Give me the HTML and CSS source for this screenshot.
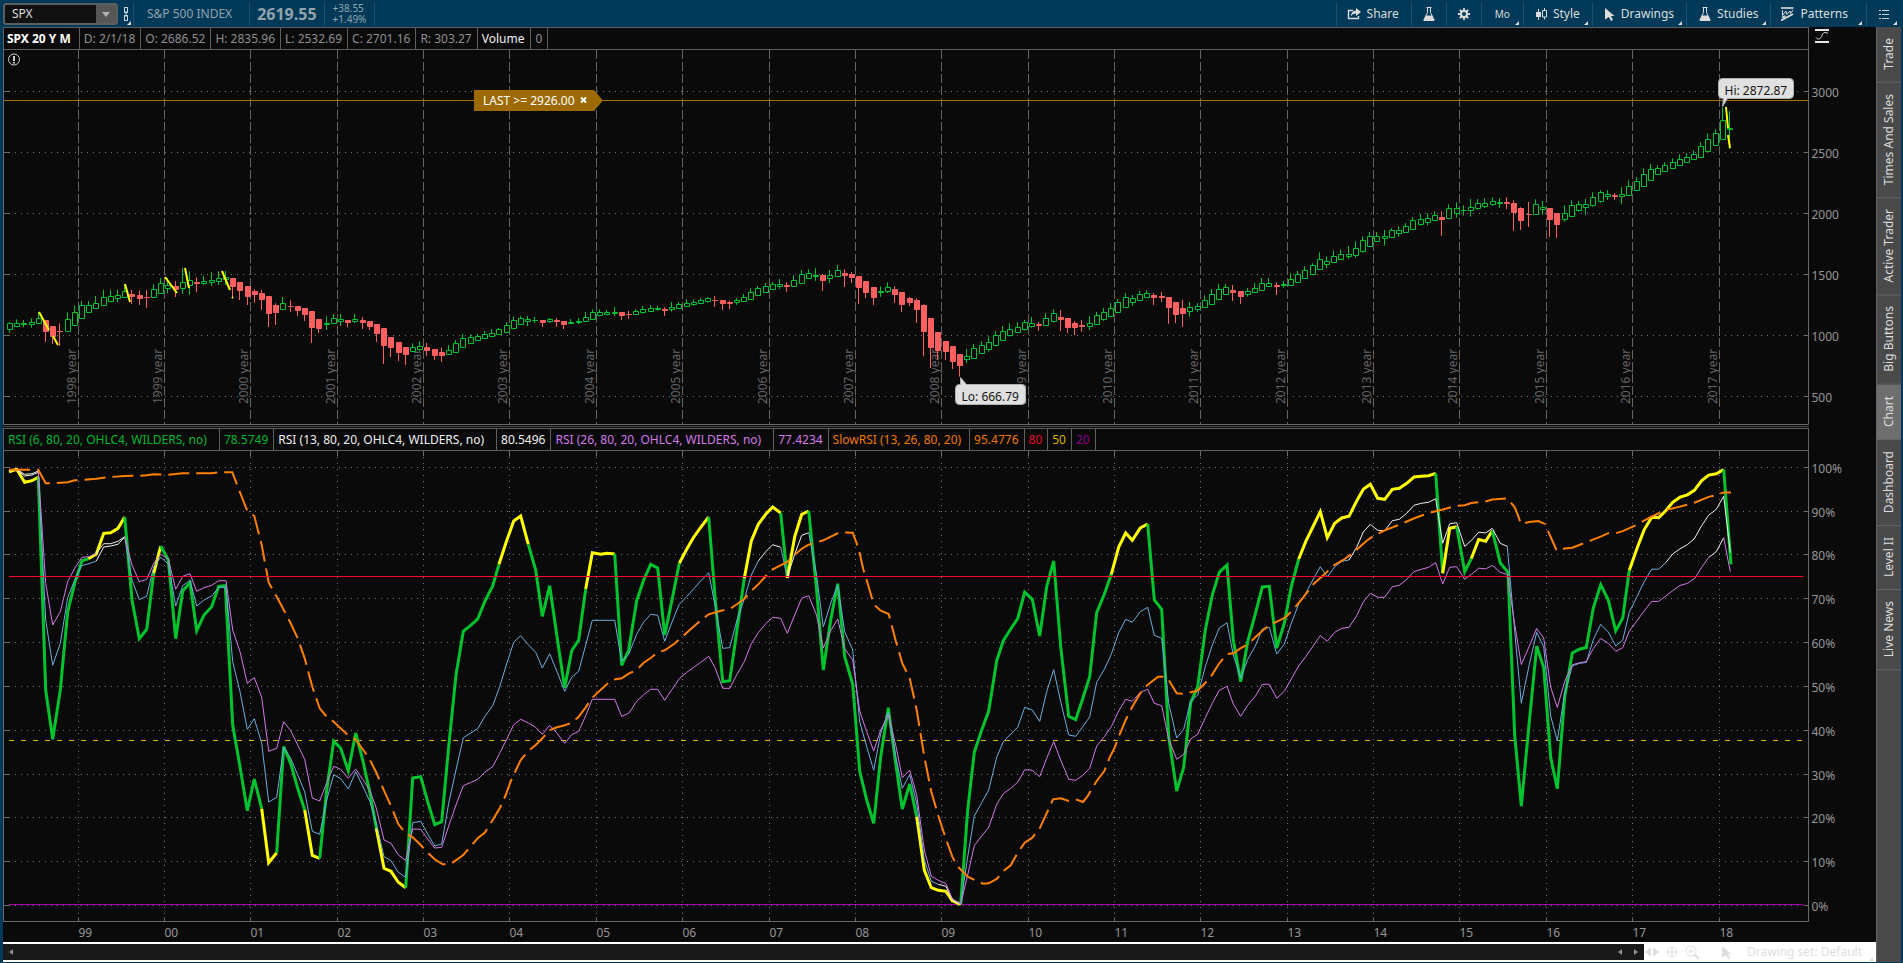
FILE: index.html
```html
<!DOCTYPE html>
<html lang="en">
<head>
    <meta charset="UTF-8">
    <title>SPX - Chart</title>
    <link rel="stylesheet" href="styles.css">
</head>
<body>
    <header class="toolbar">
        <div class="symbol">
            <input type="text" value="SPX" aria-label="Symbol">
            <button type="button" aria-label="Recent symbols"><svg width="8" height="5"><path d="M0 0h8L4 5z" fill="#b4b4b4"/></svg></button>
        </div>
        <button type="button" class="link-btn menu" aria-label="Link color">
            <svg width="6" height="14" fill="none" stroke="#c8d4dc"><rect x="1.5" y="0.5" width="3" height="5"/><rect x="1.5" y="8.5" width="3" height="5"/><path d="M3 4v6"/></svg>
        </button>
        <div class="name">S&amp;P 500 INDEX</div>
        <div class="last">2619.55</div>
        <div class="change"><span>+38.55</span><span>+1.49%</span></div>
        <nav class="actions">
            <button type="button" class="share">
                <svg width="14" height="12"><path d="M6 2.5H1.5v8h10V8" fill="none" stroke="#dcdcdc" stroke-width="1.4"/><path d="M9 0l5 4-5 4V5.500C6.500 5.500 5 6.500 3.500 8.500 4 5 6 2.800 9 2.500z" fill="#dcdcdc"/></svg>
                Share
            </button>
            <button type="button" class="icon-only" aria-label="Edit studies">
                <svg width="12" height="14"><path d="M3.500.500h5M4.500.500v5L.800 13h10.400L7.500 5.500v-5" fill="none" stroke="#dcdcdc"/><path d="M3.200 8.500h5.600L11.500 14H.500z" fill="#dcdcdc"/></svg>
            </button>
            <button type="button" class="icon-only" aria-label="Settings">
                <svg width="12" height="12" fill="none" stroke="#dcdcdc"><circle cx="6" cy="6" r="3" stroke-width="2"/><path d="M6 0v2.500M6 9.500V12M0 6h2.500M9.500 6H12M1.800 1.800l1.700 1.700M8.500 8.500l1.700 1.700M1.800 10.200l1.700-1.700M8.500 3.500l1.700-1.700" stroke-width="1.800"/></svg>
            </button>
            <button type="button" class="menu period">Mo</button>
            <button type="button" class="menu">
                <svg width="11" height="12"><path d="M2.500 1v11" stroke="#dcdcdc"/><path d="M0 4h5v5H0z" fill="#dcdcdc"/><path d="M8.500 0v2.500M8.500 9v2.500M6.500 2.500h4V9h-4z" fill="none" stroke="#dcdcdc"/></svg>
                Style
            </button>
            <button type="button" class="menu">
                <svg width="10" height="13"><path d="M0 0l9.500 8H6l2 4-2 1-2-4-4 2.500z" fill="#dcdcdc"/></svg>
                Drawings
            </button>
            <button type="button" class="menu">
                <svg width="12" height="14"><path d="M3.500.500h5M4.500.500v5L.800 13h10.400L7.500 5.500v-5" fill="none" stroke="#dcdcdc"/><path d="M3.200 8.500h5.600L11.500 14H.500z" fill="#dcdcdc"/></svg>
                Studies
            </button>
            <button type="button" class="menu wide">
                <svg width="13" height="14" fill="none" stroke="#dcdcdc"><path d="M0 1h12.500" stroke-width="1.600"/><path d="M1.500 3v5.500L5 4l1 3.500L9 4l.500 2.500L12 3"/><path d="M0 13.500L12 7M1 10.500L4.500 9" stroke-width="1.800"/></svg>
                Patterns
            </button>
            <button type="button" class="menu list" aria-label="Menu">
                <svg width="10" height="10" stroke="#c8d4dc"><path d="M0 1.500h2M3 1.500h7M0 5.500h2M3 5.500h7M0 9.500h2M3 9.500h7"/></svg>
            </button>
        </nav>
    </header>
    <main class="workspace">
        <section class="chart">
            <div class="info-row">
                <ul class="info">
                    <li class="title">SPX 20 Y M</li>
                    <li>D: 2/1/18</li>
                    <li>O: 2686.52</li>
                    <li>H: 2835.96</li>
                    <li>L: 2532.69</li>
                    <li>C: 2701.16</li>
                    <li>R: 303.27</li>
                    <li class="volume">Volume</li>
                    <li>0</li>
                </ul>
                <button type="button" class="scale-btn" aria-label="Axis scale">
                    <svg width="14" height="14" fill="none" stroke="#e6e6e6"><path d="M0 1h14M0 13h14" stroke-width="2"/><path d="M1 8.500c2 3 5 1 6-2s3-4 6-2"/></svg>
                </button>
            </div>
            <div class="plot plot-price"><svg id="price"></svg></div>
            <div class="splitter"></div>
            <div class="info-row">
                <ul class="info">
                    <li class="green study">RSI (6, 80, 20, OHLC4, WILDERS, no)</li>
                    <li class="green">78.5749</li>
                    <li class="white study">RSI (13, 80, 20, OHLC4, WILDERS, no)</li>
                    <li class="white">80.5496</li>
                    <li class="violet study">RSI (26, 80, 20, OHLC4, WILDERS, no)</li>
                    <li class="violet">77.4234</li>
                    <li class="orange slow">SlowRSI (13, 26, 80, 20)</li>
                    <li class="orange">95.4776</li>
                    <li class="red">80</li>
                    <li class="yellow">50</li>
                    <li class="purple">20</li>
                </ul>
            </div>
            <div class="plot plot-rsi"><svg id="rsi"></svg></div>
            <footer class="bottom">
                <div class="scrollbar">
                    <button type="button" aria-label="Scroll to start"><svg width="4" height="6"><path d="M4 0v6L0 3z" fill="#8c8c8c"/></svg></button>
                    <span class="track"></span>
                    <button type="button" aria-label="Scroll left"><svg width="4" height="6"><path d="M4 0v6L0 3z" fill="#8c8c8c"/></svg></button>
                    <button type="button" aria-label="Scroll right"><svg width="4" height="6"><path d="M0 0v6l4-3z" fill="#8c8c8c"/></svg></button>
                </div>
                <div class="tools">
                    <button type="button" aria-label="Pan"><svg width="14" height="10" fill="#dedede"><path d="M0 5l5-4v8zM14 5L9 1v8zM5 1h1v8H5zM8 1h1v8H8z"/></svg></button>
                    <button type="button" aria-label="Crosshair"><svg width="12" height="12" fill="none" stroke="#dedede"><circle cx="6" cy="6" r="4.500"/><path d="M6 0v12M0 6h12"/></svg></button>
                    <button type="button" aria-label="Zoom in"><svg width="15" height="15" fill="none" stroke="#dedede"><circle cx="6" cy="6" r="5"/><path d="M6 3.500v5M3.500 6h5"/><path d="M9.500 9.500l4.500 4.500" stroke-width="2"/></svg></button>
                    <button type="button" class="pointer" aria-label="Pointer"><svg width="10" height="13"><path d="M0 0l9.500 8H6l2 4-2 1-2-4-4 2.500z" fill="#dedede"/></svg></button>
                    <button type="button" class="menu set">Drawing set: Default</button>
                </div>
            </footer>
        </section>
        <nav class="gadgets">
            <button type="button">Trade</button>
            <button type="button">Times And Sales</button>
            <button type="button">Active Trader</button>
            <button type="button">Big Buttons</button>
            <button type="button" class="active">Chart</button>
            <button type="button">Dashboard</button>
            <button type="button">Level II</button>
            <button type="button">Live News</button>
        </nav>
    </main>
    <script src="chart.js"></script>
</body>
</html>
```
FILE: styles.css
```css
*{box-sizing: border-box;}
html,body{height: 100%;margin: 0;}
body{display: flex;flex-direction: column;padding: 0 2px 1px 3px;background-color: #003a58;color: #8f8f8f;font: 12px/20px "Noto Sans","Open Sans",sans-serif;overflow: hidden;}
ul,li{list-style: none;margin: 0;padding: 0;}
button{margin: 0;padding: 0;border: 0;background: none;color: inherit;font: inherit;white-space: nowrap;cursor: pointer;}
svg{display: block;flex: none;}

/* toolbar */
.toolbar{display: flex;flex: none;height: 27px;padding: 2px 0 1px;color: #93a3ae;}
.toolbar > div,.link-btn{display: flex;align-items: center;border-right: 1px solid #1a4f6e;}
.toolbar .symbol{width: 115px;height: 22px;margin-top: 1px;border: 2px solid #5a5f62;border-radius: 3px;background-color: #111;}
.symbol input{flex: 1;min-width: 0;height: 18px;padding: 0 7px;border: 0;background: none;color: #dcdcdc;font: inherit;outline: 0;}
.symbol button{display: flex;align-items: center;justify-content: center;width: 20px;height: 18px;background-color: #565656;}
.link-btn{width: 16px;padding-left: 5px;}
.toolbar .name{padding: 0 17px 0 13px;}
.toolbar .last{padding: 0 7px;font-size: 16px;font-weight: bold;}
.toolbar .change{flex-direction: column;align-items: flex-start;justify-content: center;padding: 0 8px;font-size: 10px;line-height: 11px;}
.actions{display: flex;margin-left: auto;color: #dcdcdc;}
.actions button{display: flex;align-items: center;gap: 6px;padding: 0 12px;border-left: 1px solid #1a4f6e;}
.actions .share{padding: 0 12px 0 10px;}
.actions .wide{padding: 0 18px 0 10px;}
.actions .icon-only{padding: 0 11px;}
.actions .period{padding: 0 13px;font-size: 10px;}
.menu{position: relative;}
.menu:after{content: "";position: absolute;right: 4px;bottom: 1px;border-bottom: 4px solid #dcdcdc;border-left: 4px solid transparent;}
.link-btn:after{right: 2px;}

/* chart */
.workspace{display: flex;flex: 1;min-height: 0;}
.chart{display: flex;flex: 1;flex-direction: column;min-width: 0;background-color: #0a0a0a;}
.info-row{display: flex;flex: none;height: 23px;}
.info{display: flex;flex: 1;margin-right: 67px;border: 1px solid #5f5f5f;line-height: 21px;white-space: nowrap;}
.info li{padding: 0 5px 0 4px;border-right: 1px solid #5f5f5f;}
.info .study{padding: 0 12px 0 4px;}
.info .slow{padding: 0 8px 0 4px;}
.info .title{padding: 0 8px 0 3px;color: #fff;font-weight: bold;}
.info .volume{padding: 0 6px 0 4px;color: #f0f0f0;}
.scale-btn{align-self: flex-start;width: 14px;margin: 2px 47px 0 -61px;}
.white{color: #f0f0f0;}
.green{color: #00b82e;}
.violet{color: #d478e8;}
.orange{color: #f07800;}
.red{color: #e6002e;}
.yellow{color: #d8b400;}
.purple{color: #8c008c;}
.plot{min-height: 0;overflow: hidden;}
.plot-price{flex: 375 1 0;}
.plot-rsi{flex: 491 1 0;}
.plot svg{width: 100%;height: 100%;font: 12px "Noto Sans","Open Sans",sans-serif;}
.splitter{flex: none;height: 3px;margin-right: 67px;border-bottom: 1px solid #0a0a0a;border-top: 1px solid #0a0a0a;background-color: #4a4a4a;}

/* svg parts */
.frame{stroke: #6a6a6a;fill: none;}
.dots{stroke: #747474;stroke-dasharray: 1 5;}
.year{stroke: #646464;stroke-dasharray: 9 3;}
.year-label{fill: #646464;}
.axis-label{fill: #969696;}
.up{fill: #0a0a0a;stroke: #00c42e;}
.down{fill: #ff5f5f;stroke: #ff5f5f;}
.drawn{stroke: #ff0;stroke-width: 2;}
.alert{stroke: #a87000;}
.flag{fill: #9c6a00;}
.flag-text{fill: #fff;}
.bubble{fill: #e0e0e0;stroke: #b0b0b0;}
.bubble-text{fill: #141414;}
.notice{fill: none;stroke: #d0d0d0;}

/* bottom */
.bottom{display: flex;flex: none;height: 20px;background-color: #fff;color: #dedede;}
.scrollbar{display: flex;flex: 1;align-items: center;height: 16px;margin-top: 2px;padding: 0 6px;background-color: #191919;}
.track{flex: 1;}
.scrollbar button + button{margin-left: 12px;}
.tools{display: flex;align-items: center;gap: 7px;padding-left: 1px;}
.tools .pointer{margin-left: 15px;}
.tools .set{margin-left: 8px;padding-right: 14px;}
.tools .menu:after{right: 3px;border-bottom-color: #dedede;}

/* right side tabs */
.gadgets{display: flex;flex: none;flex-direction: column;width: 25px;border-left: 1px solid #646464;background-color: #4a4a4a;color: #dcdcdc;}
.gadgets button{padding: 12px 2px 11px;border-top: 1px solid #646464;writing-mode: vertical-rl;transform: rotate(180deg);text-align: center;}
.gadgets .active{background-color: #6e6e6e;}
```
FILE: chart.js
```javascript
var NS = 'http://www.w3.org/2000/svg';
var AXIS = 68, MONTH = 7.197, FIRST = 9.5;
var PLOT_W = 1805, LEFT = 3;
var COLORS = {Y: '#ffff00', G: '#00c42e', W: '#f0f0f0', B: '#6caede', P: '#d478e8', O: '#ff8000'};

// bars: close,high,low below the top of the block, in 1/3 px; base is the 500 level
var bars = [
    {base: 469, data: '250,247,278 250,238,262 251,240,262 247,235,263 236,216,250 276,243,306 290,259,312 275,250,318 238,217,274 217,197,257 ' +
        '196,183,236 196,183,217 190,168,206 172,150,199 169,150,187 166,150,187 154,133,172 171,150,192 176,152,195 173,150,204 ' +
        '148,133,172 130,114,160 136,114,160 150,123,171 127,84,162 121,94,165 131,112,156 124,108,135 121,96,138 115,94,135 ' +
        '112,93,135 140,115,175 152,127,180 170,139,195 164,147,188 180,150,210 222,169,261 219,190,255 190,171,206 200,181,216 ' +
        '213,199,228 225,205,243 263,214,309 267,238,279 250,229,270 235,222,252 238,222,258 248,241,262 238,222,249 248,231,267 ' +
        '261,244,270 281,253,306 317,265,372 323,292,351 338,307,363 345,322,375 322,310,334 319,304,334 332,309,348 347,328,360 ' +
        '347,323,366 331,315,345 310,300,335 295,282,322 292,283,310 289,282,303 283,273,297 280,267,291 268,264,284 256,247,278 ' +
        '241,229,268 235,228,255 240,228,258 242,231,249 248,241,261 240,234,249 246,234,261 254,244,267 247,237,252 244,234,253 ' +
        '232,216,244 217,208,240 217,208,228 217,210,225 217,201,228 227,217,240 224,213,237 214,208,225 208,198,221 205,196,215 ' +
        '206,198,212 212,202,228 202,186,215 193,186,206 190,178,200 187,178,197 181,174,191 175,171,188 182,168,201 191,181,210 ' +
        '191,182,207 181,175,195 172,162,186 157,145,179 145,138,168 139,130,158 133,126,149 133,117,147 141,127,156 121,106,137 ' +
        '103,90,131 100,88,117 106,84,123 122,102,153 106,90,129 91,75,110 107,88,141 113,96,129 143,109,192 158,124,174 ' +
        '173,142,195 154,139,171 142,127,159 164,139,189 194,157,216 188,171,198 209,175,249 275,193,348 323,235,384 332,280,357 ' +
        '335,304,360 365,319,387 377,343,410 349,327,369 325,312,356'},
    {base: 649, data: '496,484,521 487,469,515 466,453,500 454,438,482 448,430,470 442,427,458 427,420,452 430,411,443 438,426,453 415,400,438 ' +
        '400,388,428 419,390,453 443,415,459 443,423,465 440,420,456 430,408,450 406,396,434 397,384,422 385,369,410 367,358,398 ' +
        '352,339,383 355,345,377 343,333,362 340,331,353 353,339,375 353,336,366 384,352,432 404,367,429 402,360,441 382,366,410 ' +
        '379,369,395 361,346,383 343,327,374 328,312,359 322,312,344 338,315,363 350,334,372 334,324,350 325,309,338 310,294,332 ' +
        '310,294,320 320,307,345 313,303,323 298,280,317 283,273,308 271,259,296 256,250,284 238,217,269 244,229,264 229,211,248 ' +
        '223,208,239 223,198,237 205,184,233 181,169,218 169,156,200 169,156,185 169,150,197 151,145,173 151,139,170 139,129,158 ' +
        '121,112,149 118,102,137 115,100,136 106,94,122 119,94,168 85,73,116'},
    {base: 949, data: '385,367,413 391,376,407 382,357,410 370,357,389 370,355,384 364,352,377 367,355,384 371,352,387 399,361,453 422,382,450 ' +
        '404,366,441 373,358,404 382,363,404 419,385,471 434,400,474 400,376,425 376,361,410 373,363,395 373,357,404 352,337,380 ' +
        '337,331,368 343,331,360 350,339,360 343,322,372 319,301,347 304,292,332 283,265,317 268,252,302 265,256,284 256,247,275 ' +
        '247,235,266 238,223,257 232,220,248 223,211,239 199,187,230 178,160,215 160,148,197 121,82,179 145,93,207'}
];

// study lines: four blocks from left to right, a letter sets the color of what follows
var BLOCKS = [{x: 0, k: 3}, {x: 500, k: 3}, {x: 1000, k: 3}, {x: 1440, k: 2.888}];
var rsi6 = [
    'Y 27,155 50,148 74,187 96,182 115,172 G 137,810 158,958 181,810 203,575 224,490 246,422 265,416 Y 289,402 311,340 332,338 354,325 374,291 G 396,540 418,656 440,628 461,460 Y 482,378 G 505,420 527,656 548,513 570,488 590,632 612,585 635,560 656,499 676,497 698,915 720,1040 742,1172 763,1077 785,1166 Y 806,1328 830,1298 G 851,980 872,1030 893,1105 914,1170 Y 937,1306 959,1315 G 980,1110 1001,963 1022,985 1045,1053 1067,939 1088,1020 1110,1120 1129,1225 Y 1152,1345 1173,1354 1195,1387 1217,1403 G 1238,1074 1262,1070 1283,1145 1304,1214 1325,1205 1346,980 1368,765 1390,634 1411,617 1433,597 1454,545 1478,498 1497,433 Y 1519,365',
    '41,303 62,288 85,373 G 107,450 127,589 149,497 171,650 194,803 215,692 236,660 257,507 Y 277,398 302,403 322,400 344,402 G 365,736 386,690 410,542 431,480 452,433 473,444 494,645 516,540 538,430 Y 560,388 580,353 602,322 626,291 G 646,540 668,785 689,782 711,630 733,475 Y 754,363 775,313 797,283 818,261 842,279 G 862,474 Y 884,350 905,283 926,273 G 949,500 970,750 992,600 1013,491 1034,710 1058,792 1079,1053 1100,1140 1121,1210 1142,1010 1165,863 1187,1030 1207,1167 1229,1092 1250,1190 Y 1273,1350 1294,1403 1315,1411 1338,1414 1357,1442 1382,1453 G 1403,1170 1423,997 1445,930 1466,873 1490,722 1510,662 1532,627',
    '53,596 74,516 97,538 119,648 140,500 161,423 182,680 206,889 227,899 247,840 269,770 290,578 313,523 334,463 Y 356,381 377,339 397,361 421,324 443,312 G 463,540 485,568 506,950 530,1113 551,1042 572,848 593,800 616,630 637,525 658,457 681,435 700,660 722,785 743,665 766,582 787,501 808,499 830,684 853,610 874,500 896,417 Y 917,365 940,318 961,275 982,353 1004,310 1025,294 1047,289 1070,243 1090,208 1111,193 1133,235 1154,238 1177,208 1198,205 1220,190 1242,171 1264,169 1286,167 1307,160 G 1328,460 Y 1349,325 1370,320',
    'G 74,438 94,400 Y 116,345 137,350 157,320 G 181,413 204,440 224,910 244,1115 267,880 290,653 311,715 332,975 352,1065 374,800 397,673 418,662 439,657 460,543 482,476 505,520 527,609 548,572 568,434 Y 590,373 612,318 635,281 656,282 677,262 698,238 720,223 742,216 763,203 785,175 806,159 829,155 851,143 G 873,417'
];
var rsi13 = [
    'W 27,152 50,150 74,168 96,165 115,157 B 137,600 158,736 181,670 203,533 224,480 244,437 267,431 289,423 W 311,381 332,378 354,373 374,351 B 396,480 418,539 440,529 461,440 482,412 505,432 527,558 548,497 570,481 590,558 612,540 635,528 656,502 678,502 698,725 720,815 742,928 763,896 785,970 806,1146 830,1132 851,982 872,1015 893,1065 914,1115 937,1234 959,1243 980,1140 1001,1064 1022,1076 1045,1107 1067,1055 1088,1098 1110,1145 1129,1210 1152,1310 1173,1322 1195,1357 1217,1372 1238,1208 1262,1204 1283,1242 1304,1278 1325,1272 1346,1150 1368,1050 1390,953 1411,940 1433,926 1454,890 1478,857 1499,800 1519,735',
    '41,667 62,647 85,674 107,697 127,744 149,701 171,755 194,814 215,772 236,754 257,675 277,601 344,601 365,724 386,703 410,643 431,606 452,583 473,586 494,664 516,606 538,553 560,530 580,508 602,483 626,458 646,560 668,685 689,683 711,600 733,537 754,465 775,423 W 797,395 818,374 842,382 B 862,471 W 884,403 905,346 926,338 B 949,460 970,621 992,550 1013,496 1034,635 1058,690 1079,905 1100,980 1121,1051 1142,940 1165,876 1187,1010 1207,1105 1229,1064 1250,1150 1273,1320 1294,1384 1315,1393 W 1338,1399 1357,1440 1382,1453 B 1403,1310 1423,1188 1445,1148 1466,1110 1490,1012 1510,965 1532,942',
    '53,922 74,862 97,870 119,904 140,815 161,749 182,845 206,945 227,949 247,922 269,891 290,787 313,748 334,703 356,638 377,598 397,607 421,575 443,562 463,646 485,655 506,850 530,954 551,928 572,843 593,825 616,740 637,675 658,624 681,608 700,705 722,775 743,718 766,678 787,627 808,622 830,702 853,673 874,610 896,552 917,520 940,477 961,440 982,471 1004,440 1025,424 1047,420 W 1070,382 1090,336 1111,313 1133,331 1154,332 1177,302 1198,298 1220,280 1242,256 1264,250 1286,247 1307,236 1328,370 1349,311 1370,308',
    '74,365 94,348 116,324 137,326 157,313 181,356 202,365 B 224,610 244,818 267,710 290,613 311,655 332,855 352,927 374,790 397,710 418,703 439,700 460,634 482,590 505,612 527,652 548,636 568,555 590,512 612,468 635,431 656,431 677,412 W 698,387 720,372 742,360 763,343 785,305 806,275 829,258 851,220 871,383'
];
var rsi26 = [
    'W 27,150 50,148 74,163 96,161 115,153 P 137,490 158,615 181,575 203,485 224,445 246,412 267,410 289,400 W 311,371 332,371 354,364 374,350 P 396,435 418,485 440,478 461,430 482,403 505,417 527,508 548,469 570,461 590,514 612,503 635,496 656,482 678,482 698,630 720,695 742,790 763,773 785,832 806,994 830,985 851,905 872,932 893,975 914,1018 937,1134 959,1143 980,1088 1001,1039 1022,1048 1045,1075 1067,1047 1088,1078 1110,1112 1129,1165 1152,1260 1173,1270 1195,1305 1217,1321 1238,1227 1262,1228 1283,1257 1304,1284 1325,1282 1346,1218 1368,1155 1390,1097 1411,1088 1433,1078 1454,1057 1478,1040 1499,1000 1519,960',
    '41,914 62,898 85,909 107,922 127,943 149,916 171,940 194,970 215,944 236,934 257,887 277,838 344,838 365,889 386,880 410,844 431,824 452,808 473,808 494,841 516,808 538,776 560,757 580,743 602,727 626,709 646,745 668,805 689,805 711,763 733,725 754,671 775,638 797,611 818,592 842,595 862,640 884,585 905,535 926,527 949,583 970,684 992,632 1013,597 1034,686 1058,720 1079,873 1100,935 1121,993 1142,930 1165,884 1187,975 1207,1073 1229,1050 1250,1125 1273,1290 1294,1369 1315,1381 1338,1391 1357,1437 1382,1452 1403,1365 1423,1277 1445,1248 1466,1222 1490,1153 1510,1121 1532,1105',
    '53,1087 74,1049 97,1051 119,1070 140,1015 161,965 182,1020 206,1078 227,1081 247,1067 269,1045 290,978 313,950 334,920 356,873 377,838 397,844 421,817 443,808 463,850 485,857 506,958 530,1018 551,1003 572,957 593,943 616,893 637,850 658,811 681,799 700,852 722,889 743,856 766,829 787,793 808,793 830,835 853,814 874,777 896,738 917,710 940,677 961,647 982,664 1004,637 1025,625 1047,622 1070,587 1090,546 1111,520 1133,532 1154,532 1177,500 1198,496 1220,478 1242,455 1264,448 1286,442 1307,428 1328,492 1349,442 1370,440',
    '74,460 94,446 116,428 137,430 157,420 181,440 202,446 224,590 244,706 267,655 290,602 311,630 332,772 352,830 374,755 397,707 418,701 439,698 460,660 482,631 505,645 527,668 548,658 568,610 612,552 635,524 656,524 698,493 720,478 742,472 765,457 785,425 806,397 W 829,380 851,340 P 871,438'
];
var slow = [
    'O 27,149 115,149 137,190 158,190 181,188 203,187 224,181 246,180 289,176 332,171 374,168 418,167 440,166 461,163 505,164 548,160 635,160 656,157 697,157 720,217 742,273 763,288 785,375 806,488 830,530 851,569 872,610 893,655 914,715 937,800 959,865 980,890 1001,905 1040,942 1067,959 1096,998 1110,1020 1131,1062 1152,1112 1173,1158 1195,1212 1217,1240 1238,1252 1262,1275 1283,1298 1304,1318 1328,1333 1352,1332 1390,1305 1411,1280 1433,1255 1454,1238 1478,1200 1500,1163 1517,1125',
    '34,1080 62,1020 85,993 107,975 130,952 150,930 171,922 194,916 215,908 236,890 257,862 277,833 320,793 340,779 365,775 386,761 410,750 431,728 452,714 473,697 494,691 525,670 560,638 602,601 626,583 663,572 689,567 711,553 733,536 754,513 775,493 797,468 818,448 862,426 880,408 905,386 926,374 970,361 1013,340 1030,337 1058,338 1069,367 1079,400 1090,448 1100,480 1121,553 1142,572 1166,582 1188,665 1207,730 1229,775 1250,870 1273,1010 1294,1115 1315,1187 1328,1228 1338,1257 1357,1310 1372,1338 1403,1370 1435,1385 1450,1391 1466,1390 1490,1377 1510,1353',
    '32,1336 53,1298 74,1268 97,1253 119,1225 140,1180 159,1138 182,1135 206,1143 227,1138 249,1146 262,1130 290,1083 313,1053 330,1010 344,983 356,950 377,900 397,860 421,820 443,794 474,770 495,770 506,780 530,820 551,821 590,813 607,798 620,784 637,763 658,730 681,702 700,700 720,686 743,673 766,652 787,632 808,616 857,592 880,568 910,532 940,493 965,470 1004,434 1030,420 1060,398 1100,362 1120,348 1154,331 1198,314 1245,294 1286,279 1326,269 1370,257',
    '74,246 94,240 137,235 157,230 202,226 224,252 232,270 243,300 267,295 295,292 314,300 332,338 350,377 374,371 397,369 439,353 482,337 505,327 527,327 548,321 585,305 635,279 677,260 720,250 763,239 806,222 829,217 851,209 873,209'
];

function add(parent, tag, attrs, text) {
    var el = document.createElementNS(NS, tag);
    for (var key in attrs) {
        el.setAttribute(key, attrs[key]);
    }
    if (text) {
        el.textContent = text;
    }
    parent.appendChild(el);
    return el;
}

function line(svg, cls, x1, y1, x2, y2) {
    return add(svg, 'path', {'class': cls, d: 'M' + x1 + ' ' + y1 + 'L' + x2 + ' ' + y2});
}

// middle of the nearest pixel, keeps thin lines sharp
function snap(v) {
    return Math.floor(v) + 0.5;
}

function makeX(w) {
    var k = (w - AXIS) / PLOT_W;
    return function (x) {
        return (x - LEFT) * k;
    };
}

function yearX(n, X) {
    return snap(X(FIRST + (9.5 + n * 12) * MONTH + 0.3));
}

function drawPrice() {
    var svg = document.getElementById('price'),
        w = svg.parentNode.clientWidth,
        h = svg.parentNode.clientHeight,
        X = makeX(w),
        ky = (h - 1) / 374,
        right = w - AXIS + 0.5,
        i, x, y;
    function Y(v) {
        return (v - 50) * ky;
    }
    svg.innerHTML = '';

    for (i = 0; i < 20; i++) {
        x = yearX(i, X);
        add(svg, 'text', {'class': 'year-label', transform: 'translate(' + (x - 3) + ' ' + Y(404) + ') rotate(-90)'}, (1998 + i) + ' year');
        line(svg, 'year', x, 0, x, h - 1);
    }
    for (i = 0; i < 6; i++) {
        y = snap(Y(396.3 - i * 61));
        line(svg, 'dots', 6, y, right - 6, y);
        line(svg, 'frame', 0, y, 6, y);
        line(svg, 'frame', right - 5, y, right, y);
        add(svg, 'text', {'class': 'axis-label', x: right + 3, y: y + 5}, String(500 + i * 500));
    }
    add(svg, 'path', {'class': 'frame', d: 'M0.5 0V' + (h - 0.5) + 'H' + right + 'V0'});

    y = snap(Y(100));
    line(svg, 'alert', 1, y, right, y);

    // alert flag
    x = Math.round(X(474));
    add(svg, 'path', {'class': 'flag', d: 'M' + x + ' ' + (y - 10.5) + 'h120l9 10.500l-9 10.500h-120z'});
    add(svg, 'text', {'class': 'flag-text', x: x + 9, y: y + 4}, 'LAST >= 2926.00');
    add(svg, 'path', {d: 'M' + (x + 107) + ' ' + (y - 3) + 'l5 5m0 -5l-5 5', stroke: '#fff', 'stroke-width': 2});

    // Heikin-Ashi: every open is the middle of the previous body
    var n = 0, open = null, prev = 0;
    bars.forEach(function (block) {
        block.data.split(' ').forEach(function (item) {
            var v = item.split(',').map(function (s) {
                return 396.3 - (block.base - s) / 3;
            });
            open = n ? (open + prev) / 2 : v[0] + 6.3;
            prev = v[0];
            var up = v[0] <= open,
                cx = snap(X(FIRST + n * MONTH)),
                top = snap(Y(Math.min(open, v[0]))),
                bottom = snap(Y(Math.max(open, v[0])));
            add(svg, 'path', {
                'class': up ? 'up' : 'down',
                d: 'M' + cx + ' ' + Y(v[1]) + 'V' + Y(v[2]) + 'M' + (cx - 2) + ' ' + top + 'h5V' + bottom + 'h-5z'
            });
            if (up && bottom - top > 1) {
                add(svg, 'rect', {x: cx - 1.5, y: top + 0.5, width: 4, height: bottom - top - 1, fill: '#0a0a0a'});
            }
            n++;
        });
    });

    [[39, 312, 49, 330], [53, 336, 58, 345], [125, 284, 130, 302], [165, 277, 177, 293], [185, 268, 189, 288],
     [222, 271, 230, 290], [232, 297, 233, 298], [1726, 107, 1728, 128], [1728, 135, 1730, 148]].forEach(function (p) {
        line(svg, 'drawn', X(p[0]), Y(p[1]), X(p[2]), Y(p[3]));
    });

    // high and low
    x = Math.round(X(1718)) + 0.5;
    y = Math.round(Y(78)) + 0.5;
    add(svg, 'path', {'class': 'bubble', d: 'M' + (x + 4) + ' ' + y + 'h67q4 0 4 4v12q0 4 -4 4h-62l-5 8l1 -8h-1q-4 0 -4 -4v-12q0 -4 4 -4z'});
    add(svg, 'text', {'class': 'bubble-text', x: x + 6, y: y + 16}, 'Hi: 2872.87');
    x = Math.round(X(955)) + 0.5;
    y = Math.round(Y(384)) + 0.5;
    add(svg, 'path', {'class': 'bubble', d: 'M' + (x + 4) + ' ' + y + 'h1l0 -7l6 7h55q4 0 4 4v12q0 4 -4 4h-62q-4 0 -4 -4v-12q0 -4 4 -4z'});
    add(svg, 'text', {'class': 'bubble-text', x: x + 6, y: y + 16}, 'Lo: 666.79');

    add(svg, 'circle', {'class': 'notice', cx: 11, cy: 9.5, r: 5.5});
    add(svg, 'path', {d: 'M11 6v5M11 12v1.500', stroke: '#d0d0d0', 'stroke-width': 2});
}

function drawStudy(svg, blocks, X, Y, attrs) {
    var color = '', d = '', last = '';
    function flush() {
        if (d) {
            attrs.stroke = COLORS[color];
            attrs.fill = 'none';
            attrs.d = d;
            add(svg, 'path', attrs);
        }
    }
    blocks.forEach(function (block, b) {
        block.split(' ').forEach(function (item) {
            if (COLORS[item]) {
                if (item !== color) {
                    flush();
                    color = item;
                    d = last ? 'M' + last : '';
                }
                return;
            }
            var p = item.split(',');
            last = X(BLOCKS[b].x + p[0] / 3).toFixed(1) + ' ' + Y(420 + p[1] / BLOCKS[b].k).toFixed(1);
            d += (d ? 'L' : 'M') + last;
        });
    });
    flush();
}

function drawRsi() {
    var svg = document.getElementById('rsi'),
        w = svg.parentNode.clientWidth,
        h = svg.parentNode.clientHeight,
        X = makeX(w),
        ky = (h - 21) / 470,
        right = w - AXIS + 0.5,
        floor = h - 20.5,
        i, x, y;
    function Y(v) {
        return (v - 451) * ky;
    }
    svg.innerHTML = '';

    for (i = 0; i < 20; i++) {
        x = yearX(i, X);
        line(svg, 'dots', x, 6, x, floor);
        line(svg, 'frame', x, 0, x, 5);
        line(svg, 'frame', x, floor - 4, x, floor);
        add(svg, 'text', {'class': 'axis-label', x: x, y: floor + 15}, String(99 + i).slice(-2));
    }
    for (i = 0; i <= 10; i++) {
        y = snap(Y(905.5 - i * 43.82));
        line(svg, 'dots', 6, y, right - 6, y);
        line(svg, 'frame', 0, y, 6, y);
        line(svg, 'frame', right - 5, y, right, y);
        add(svg, 'text', {'class': 'axis-label', x: right + 3, y: y + 5}, i * 10 + '%');
    }
    add(svg, 'path', {'class': 'frame', d: 'M0.5 0V' + floor + 'H' + right + 'V0'});

    y = snap(Y(904));
    add(svg, 'path', {d: 'M6 ' + y + 'H' + (right - 5), stroke: '#a800a8'});
    y = snap(Y(740));
    add(svg, 'path', {d: 'M6 ' + y + 'H' + (right - 5), stroke: '#e0b800', 'stroke-dasharray': '5 7'});

    drawStudy(svg, rsi6, X, Y, {'stroke-width': 3});
    drawStudy(svg, rsi13, X, Y, {});
    drawStudy(svg, rsi26, X, Y, {});
    drawStudy(svg, slow, X, Y, {'stroke-width': 2, 'stroke-dasharray': '21 7'});

    y = snap(Y(576));
    add(svg, 'path', {d: 'M6 ' + y + 'H' + (right - 5), stroke: '#ff0030'});
}

function draw() {
    drawPrice();
    drawRsi();
}

window.onresize = draw;
draw();
```
